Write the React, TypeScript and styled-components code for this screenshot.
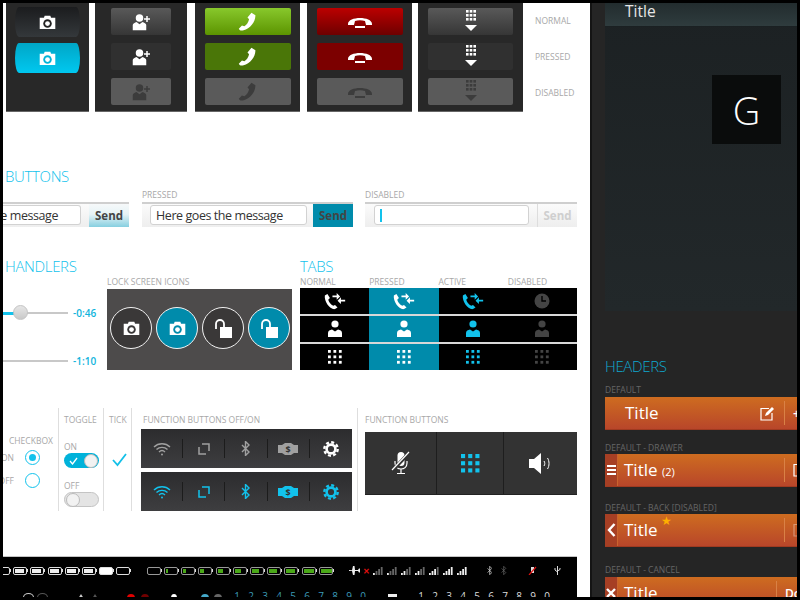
import React from 'react';
import styled, { createGlobalStyle } from 'styled-components';

const Global = createGlobalStyle`
  html, body { margin: 0; padding: 0; background: #000; }
  * { box-sizing: border-box; }
  body { font-family: "Open Sans", "Noto Sans", sans-serif; }
`;

const Frame = styled.div`
  width: 800px;
  height: 600px;
  border: 3px solid #000;
  display: flex;
  overflow: hidden;
`;

const Sheet = styled.div`
  width: 587px;
  height: 594px;
  background: #fff;
  display: flex;
  flex-direction: column;
  overflow: hidden;
`;

/* ---------- icons ---------- */

const Camera = ({ size = 17, ring = '#222' }: { size?: number; ring?: string }) => (
  <svg width={size} height={size * 0.88} viewBox="0 0 24 21">
    <path fill="#fff" d="M1 4h6l1-3h8l1 3h6v16H1z" />
    <circle cx="12" cy="12" r="6" fill={ring} />
    <circle cx="12" cy="12" r="3.4" fill="#fff" />
  </svg>
);

const AddContact = ({ color = '#fff' }: { color?: string }) => (
  <svg width="18" height="18" viewBox="0 0 24 24" fill={color}>
    <circle cx="10" cy="6.5" r="5" />
    <path d="M1 23v-7c0-2 3-3 5-4l4 3 4-3c2 1 5 2 5 4v7z" />
    <path d="M19 4h2v3h3v2h-3v3h-2V9h-3V7h3z" />
  </svg>
);

const Phone = ({ color = '#fff' }: { color?: string }) => (
  <svg width="19" height="19" viewBox="0 0 24 24" fill={color}>
    <path d="M17 1l5 3c0 9-7 17-15 19-3 1-5 0-6-2l4-4 3 1c3-2 5-5 6-9l-2-2z" />
  </svg>
);

const HangUp = ({ color = '#fff' }: { color?: string }) => (
  <svg width="26" height="14" viewBox="0 0 26 14" fill={color}>
    <path d="M1 9C1 1 25 1 25 9v1h-6l-1-4c-3-1-7-1-10 0l-1 4H1z" />
    <rect x="8" y="11" width="10" height="2" />
  </svg>
);

const Dots = ({ color = '#fff', size = 14, cell = 3.6, pitch = 7 }: { color?: string; size?: number; cell?: number; pitch?: number }) => (
  <svg width={size} height={size} viewBox="0 0 18 18" fill={color}>
    {[0, 1, 2].flatMap((r) => [0, 1, 2].map((c) => <rect key={`${r}${c}`} x={c * pitch} y={r * pitch} width={cell} height={cell} />))}
  </svg>
);

const DialDown = ({ color = '#fff' }: { color?: string }) => (
  <svg width="12" height="24" viewBox="0 0 12 24" fill={color}>
    {[0, 1, 2].flatMap((r) => [0, 1, 2].map((c) => <rect key={`${r}${c}`} x={1 + c * 3.7} y={r * 4} width="2.6" height="2.6" />))}
    <path d="M0 15h12l-6 6z" />
  </svg>
);

const CallLog = ({ color = '#fff' }: { color?: string }) => (
  <svg width="22" height="17" viewBox="0 0 26 20" fill={color}>
    <path d="M1 3l3-2 3 5-2 2c1 3 3 6 6 7l2-1 3 3-3 2C7 20 0 10 1 3z" />
    <path d="M10 3h5V0l4 4-4 4V5h-5zM25 8h-5V5l-4 4 4 4v-3h5z" />
  </svg>
);

const Clock = () => (
  <svg width="16" height="16" viewBox="0 0 16 16">
    <circle cx="8" cy="8" r="7.5" fill="#444" />
    <path d="M8 3v5h4" stroke="#000" strokeWidth="1.4" fill="none" />
  </svg>
);

const Contact = ({ color = '#fff' }: { color?: string }) => (
  <svg width="14" height="18" viewBox="0 0 14 18" fill={color}>
    <circle cx="7" cy="4" r="3.6" />
    <path d="M0 17v-4c0-2 2-3 4-3.4l3 2 3-2c2 .4 4 1.4 4 3.4v4z" />
  </svg>
);

const Lock = () => (
  <svg width="19" height="19" viewBox="0 0 19 19" fill="none">
    <path d="M2 10V5a4 4 0 018 0v3" stroke="#fff" strokeWidth="1.8" />
    <rect x="6" y="8" width="12" height="11" fill="#fff" />
  </svg>
);

const Wifi = ({ color }: { color: string }) => (
  <svg width="18" height="14" viewBox="0 0 18 14" fill="none" stroke={color} strokeWidth="1.4">
    <path d="M1 5c4.5-4.4 11.5-4.400 16 0M3.5 7.600c3-3 8-3 11 0M6 10c1.700-1.600 4.300-1.600 6 0" />
    <circle cx="9" cy="12.6" r="1" fill={color} stroke="none" />
  </svg>
);

const Rotate = ({ color }: { color: string }) => (
  <svg width="12" height="12" viewBox="0 0 12 12" fill="none" stroke={color} strokeWidth="1.5">
    <path d="M4 1h7v7M8 11H1V4" />
  </svg>
);

const Bluetooth = ({ color, h = 15, stroke = 1.4 }: { color: string; h?: number; stroke?: number }) => (
  <svg width={h * 0.6} height={h} viewBox="0 0 9 15" fill="none" stroke={color} strokeWidth={stroke}>
    <path d="M1 4l7 7-3.500 3.500v-14L8 4l-7 7" />
  </svg>
);

const Handshake = ({ color, text }: { color: string; text: string }) => (
  <svg width="20" height="12" viewBox="0 0 20 12">
    <path fill={color} d="M0 2h4l3-2h6l3 2h4v8h-4l-3 2H7l-3-2H0z" />
    <text x="10" y="9.5" fontSize="9" fontFamily="Open Sans" fontWeight="700" textAnchor="middle" fill={text}>$</text>
  </svg>
);

const Gear = ({ color }: { color: string }) => (
  <svg width="16" height="16" viewBox="0 0 16 16" fill="none" stroke={color}>
    <circle cx="8" cy="8" r="4.4" strokeWidth="2.6" />
    <circle cx="8" cy="8" r="6.7" strokeWidth="2.4" strokeDasharray="3 2.26" />
  </svg>
);

const MicOff = () => (
  <svg width="20" height="24" viewBox="0 0 20 24" fill="none" stroke="#fff">
    <rect x="6.5" y="1" width="7" height="14" rx="3.5" fill="#fff" stroke="none" />
    <path d="M4 10v2c0 8 12 8 12 0v-2M10 18v4M6 22.500h8" strokeWidth="1.2" />
    <path d="M1 20L18 2" stroke="#333" strokeWidth="3.4" />
    <path d="M1 19L18 1" strokeWidth="1.2" />
  </svg>
);

const Speaker = () => (
  <svg width="23" height="21" viewBox="0 0 23 21" fill="none" stroke="#fff">
    <path d="M0 6h5l7-6v21l-7-6H0z" fill="#fff" stroke="none" />
    <path d="M15 8c1 1.500 1 3.500 0 5M18.500 5c2 3 2 8 0 11" strokeWidth="1" />
  </svg>
);

const Tick = () => (
  <svg width="15" height="14" viewBox="0 0 15 14" fill="none" stroke="#14c0e8" strokeWidth="1.8">
    <path d="M1 7l4.500 5L14 1" />
  </svg>
);

const Edit = ({ faded }: { faded?: boolean }) => (
  <svg width="15" height="15" viewBox="0 0 15 15" fill="none" stroke="#fff" opacity={faded ? 0.35 : 1}>
    <path d="M9 2.500H1v11.500h11V7" strokeWidth="1.2" />
    <path d="M5 10l1-3 6-6 2 2-6 6z" fill="#fff" stroke="none" />
  </svg>
);

const Chevron = () => (
  <svg width="9" height="14" viewBox="0 0 9 14" fill="none" stroke="#fff" strokeWidth="2.4">
    <path d="M7.500 1L2 7l5.500 6" />
  </svg>
);

const Cross = () => (
  <svg width="10" height="10" viewBox="0 0 10 10" fill="none" stroke="#fff" strokeWidth="2.4">
    <path d="M1 1l8 8M9 1l-8 8" />
  </svg>
);

/* ---------- state buttons ---------- */

const ButtonRow = styled.div`
  height: 109px;
  display: flex;
  align-items: stretch;
  flex: none;
`;

const Panel = styled.div<{ $left: number; $width: number }>`
  margin-left: ${(p) => p.$left}px;
  width: ${(p) => p.$width}px;
  background: #282828;
  border-bottom: 1px solid #666;
  display: flex;
  flex-direction: column;
  align-items: center;
  padding-top: 5px;
  gap: 8px;
`;

const CamButton = styled.div<{ $on?: boolean }>`
  width: 65px;
  height: 30px;
  margin-top: ${(p) => (p.$on ? '-2px' : '-1px')};
  border-radius: 4px / 50%;
  display: flex;
  align-items: center;
  justify-content: center;
  background: ${(p) => (p.$on ? 'linear-gradient(#00a6c6, #00c8f0)' : 'linear-gradient(#1b1c1e, #34383b)')};
`;

const variants: Record<string, string> = {
  gray: 'linear-gradient(#595959, #363636)',
  grayDown: '#303030',
  off: '#5a5a5a',
  green: 'linear-gradient(#88c82c, #5c9400)',
  greenDown: '#4a7608',
  red: 'linear-gradient(#bb0000, #6e0000)',
  redDown: '#7c0000',
};

const StateButton = styled.div<{ $kind: string; $width: number }>`
  width: ${(p) => p.$width}px;
  height: 27px;
  border-radius: 2px;
  display: flex;
  align-items: center;
  justify-content: center;
  background: ${(p) => variants[p.$kind]};
`;

const StateLabels = styled.div`
  margin-left: 12px;
  display: flex;
  flex-direction: column;
  padding-top: 12px;
  gap: 25px;
`;

const Tiny = styled.div`
  font-size: 8.5px;
  line-height: 11px;
  color: #a8a8a8;
  white-space: nowrap;
`;

/* ---------- sections ---------- */

const SectionTitle = styled.div<{ $top?: number }>`
  margin-top: ${(p) => p.$top ?? 0}px;
  font-size: 15px;
  font-weight: 300;
  line-height: 17px;
  letter-spacing: -0.35px;
  color: #12c2ec;
  padding-left: 2px;
  flex: none;
`;

const FieldRow = styled.div`
  margin-top: 4px;
  height: 38px;
  display: flex;
  flex: none;
`;

const FieldGroup = styled.div<{ $left: number; $width: number }>`
  margin-left: ${(p) => p.$left}px;
  width: ${(p) => p.$width}px;
  display: flex;
  flex-direction: column;
  justify-content: flex-end;
`;

const FieldLabel = styled(Tiny)`
  margin-bottom: 2px;
`;

const FieldBar = styled.div`
  height: 25px;
  flex: none;
  border-top: 2px solid #cfcfcf;
  background: linear-gradient(#fbfbfb, #eeeeee);
  display: flex;
  justify-content: flex-end;
  align-items: stretch;
  overflow: hidden;
`;

const FieldInput = styled.div<{ $width: number; $open?: boolean; $gap: number }>`
  width: ${(p) => p.$width}px;
  height: 20px;
  margin-top: 1px;
  margin-right: ${(p) => p.$gap}px;
  background: #fff;
  border: 1px solid #d2d2d2;
  border-left: ${(p) => (p.$open ? 'none' : '1px solid #d2d2d2')};
  border-radius: ${(p) => (p.$open ? '0 3px 3px 0' : '3px')};
  display: flex;
  justify-content: ${(p) => (p.$open ? 'flex-end' : 'flex-start')};
  align-items: center;
  padding: 0 22px 0 5px;
  font-size: 12.5px;
  letter-spacing: -0.43px;
  color: #333;
  white-space: nowrap;
  overflow: hidden;
`;

const Caret = styled.div`
  width: 1.5px;
  height: 13px;
  background: #12c2ec;
`;

const SendButton = styled.div<{ $state: 'normal' | 'pressed' | 'disabled' }>`
  width: 40px;
  display: flex;
  align-items: center;
  justify-content: center;
  font-size: 11.5px;
  font-weight: 700;
  color: ${(p) => (p.$state === 'disabled' ? '#cfcfcf' : '#444')};
  border-left: ${(p) => (p.$state === 'disabled' ? '1px solid #ddd' : 'none')};
  background: ${(p) =>
    p.$state === 'pressed'
      ? '#008bab'
      : p.$state === 'normal'
        ? 'linear-gradient(#f6f9fa, #e6f3f6 45%, #86cfe0)'
        : 'transparent'};
`;

const HandlerRow = styled.div`
  margin-top: 31px;
  height: 112px;
  display: flex;
  flex: none;
`;

const SliderCol = styled.div`
  width: 104px;
`;

const SliderRow = styled.div<{ $top: number }>`
  margin-top: ${(p) => p.$top}px;
  height: 16px;
  display: flex;
  align-items: center;
  gap: 5px;
`;

const Track = styled.div`
  position: relative;
  width: 65px;
  height: 2px;
  background: #c8c8c8;
`;

const TrackFill = styled.div`
  position: absolute;
  left: 0;
  top: -0.5px;
  height: 3px;
  background: #12c2ec;
`;

const Knob = styled.div`
  position: absolute;
  top: -7px;
  width: 15px;
  height: 15px;
  border-radius: 50%;
  border: 1px solid #c4c4c4;
  background: linear-gradient(#e6e6e6, #c9c9c9);
`;

const TimeText = styled.div`
  font-size: 10px;
  font-weight: 600;
  color: #10b4dc;
`;

const LockCol = styled.div`
  width: 185px;
  padding-top: 18px;
  display: flex;
  flex-direction: column;
`;

const LockLabel = styled(Tiny)`
  margin-bottom: 2px;
`;

const LockPanel = styled.div`
  flex: 1;
  background: #4d4b4b;
  padding: 18px 0 0 3px;
  display: flex;
  align-items: flex-start;
  gap: 4px;
`;

const LockCircle = styled.div<{ $on?: boolean }>`
  width: 42px;
  height: 42px;
  border-radius: 50%;
  border: 1.5px solid #f2f2f2;
  background: ${(p) => (p.$on ? '#008bab' : '#3a3838')};
  display: flex;
  align-items: center;
  justify-content: center;
`;

const TabsCol = styled.div`
  margin-left: 8px;
  width: 277px;
`;

const TabsTitle = styled(SectionTitle)`
  padding-left: 0;
`;

const TabHeads = styled.div`
  margin-top: 1px;
  height: 12px;
  display: grid;
  grid-template-columns: repeat(4, 1fr);
`;

const TabTable = styled.div`
  display: flex;
  flex-direction: column;
  gap: 2px;
  background: #d8d8d8;
  height: 82px;
`;

const TabRow = styled.div`
  height: 26px;
  display: grid;
  grid-template-columns: repeat(4, 1fr);
  background: #000;
`;

const TabCell = styled.div<{ $pressed?: boolean }>`
  display: flex;
  align-items: center;
  justify-content: center;
  background: ${(p) => (p.$pressed ? '#008bab' : '#000')};
`;

/* ---------- controls ---------- */

const ControlRow = styled.div`
  margin-top: 38px;
  height: 103px;
  display: flex;
  flex: none;
`;

const ControlCol = styled.div<{ $width: number; $pad: number; $top?: number; $end?: boolean }>`
  width: ${(p) => p.$width}px;
  padding: ${(p) => p.$top ?? 6}px 0 0 ${(p) => p.$pad}px;
  border-right: ${(p) => (p.$end ? 'none' : '1px solid #dedede')};
  flex: none;
`;

const CheckRow = styled.div<{ $top: number }>`
  margin: ${(p) => p.$top}px 0 0 -6px;
  display: flex;
  align-items: center;
`;

const CheckText = styled(Tiny)`
  width: 11px;
  display: flex;
  justify-content: flex-end;
  overflow: hidden;
  margin-right: 11px;
`;

const Radio = styled.div<{ $on?: boolean }>`
  width: 15px;
  height: 15px;
  border-radius: 50%;
  border: 1.8px solid #12c2ec;
  display: flex;
  align-items: center;
  justify-content: center;
  &::after {
    content: '';
    width: 7px;
    height: 7px;
    border-radius: 50%;
    background: ${(p) => (p.$on ? '#12c2ec' : 'transparent')};
  }
`;

const ToggleLabel = styled(Tiny)<{ $top: number }>`
  margin-top: ${(p) => p.$top}px;
`;

const Toggle = styled.div<{ $on?: boolean }>`
  width: 35px;
  height: 15px;
  margin-top: 1px;
  border-radius: 8px;
  display: flex;
  align-items: center;
  justify-content: ${(p) => (p.$on ? 'space-between' : 'flex-start')};
  padding: 0 1px 0 ${(p) => (p.$on ? 5 : 1)}px;
  background: ${(p) => (p.$on ? '#00b2da' : '#e4e4e4')};
  border: ${(p) => (p.$on ? 'none' : '1px solid #c4c4c4')};
  &::after {
    content: '';
    width: 12px;
    height: 12px;
    border-radius: 50%;
    background: #f2f2f2;
    border: 1px solid #bbb;
  }
`;

const TickMark = styled.div`
  margin: 25px 0 0 3px;
`;

const FunctionLabel = styled(Tiny)`
  padding-left: 2px;
`;

const FunctionBar = styled.div`
  width: 211px;
  height: 39px;
  margin-top: 4px;
  display: grid;
  grid-template-columns: repeat(5, 1fr);
  align-items: center;
  background: linear-gradient(#2c2c2e, #3e3e40);
`;

const FunctionCell = styled.div<{ $last?: boolean }>`
  height: 19px;
  display: flex;
  align-items: center;
  justify-content: center;
  border-right: ${(p) => (p.$last ? 'none' : '1px solid #1c1c1c')};
`;

const BigPanel = styled.div`
  margin-top: 7px;
  width: 212px;
  height: 63px;
  display: grid;
  grid-template-columns: 72px 67px 73px;
  background: #333;
  border-bottom: 1px solid #222;
`;

const BigCell = styled.div<{ $last?: boolean }>`
  display: flex;
  align-items: center;
  justify-content: center;
  border-right: ${(p) => (p.$last ? 'none' : '1px solid #1e1e1e')};
`;

/* ---------- status strip ---------- */

const Strip = styled.div`
  margin-top: 45px;
  width: 574px;
  flex: 1;
  background: #000;
  border-top: 1px solid #c4c4c4;
  overflow: hidden;
  padding-top: 9px;
`;

const StripLine = styled.div<{ $top?: number }>`
  display: flex;
  align-items: center;
  height: 9px;
  margin-top: ${(p) => p.$top ?? 0}px;
`;

const BatteryGroup = styled.div<{ $left: number }>`
  margin-left: ${(p) => p.$left}px;
  display: flex;
  flex: none;
  gap: 3.2px;
`;

const Battery = styled.div<{ $fill: number; $green?: boolean; $bright?: boolean }>`
  position: relative;
  width: 14px;
  height: 8px;
  flex: none;
  border: 1px solid ${(p) => (p.$green ? '#999' : '#ddd')};
  border-radius: 2px;
  background: ${(p) => (p.$bright ? '#fff' : 'transparent')};
  &::before {
    content: '';
    position: absolute;
    left: 1px;
    top: 1px;
    bottom: 1px;
    width: ${(p) => p.$fill}px;
    background: ${(p) => (p.$green ? '#4aa818' : '#eee')};
  }
  &::after {
    content: '';
    position: absolute;
    right: -2px;
    top: 1.5px;
    width: 1px;
    height: 3px;
    background: #ddd;
  }
`;

const SignalSet = styled.div<{ $left: number }>`
  margin-left: ${(p) => p.$left}px;
  display: flex;
  flex: none;
  gap: 4px;
`;

const Signal = ({ level }: { level: number }) => (
  <svg width="10" height="9" viewBox="0 0 10 9">
    {[0, 1, 2, 3].map((i) => (
      <rect key={i} x={i * 2.6} y={7 - i * 2} width="1.8" height={2 + i * 2} fill={i < level ? '#eee' : '#666'} />
    ))}
  </svg>
);

const Place = styled.div<{ $left: number }>`
  margin-left: ${(p) => p.$left}px;
  display: flex;
  flex: none;
  align-items: center;
`;

const RedX = styled.span`
  margin-left: 3px;
  color: #e01010;
  font-size: 8px;
  font-weight: 700;
  line-height: 9px;
`;

const DigitRun = styled.div<{ $left: number; $color: string }>`
  margin: -2px 0 0 ${(p) => p.$left}px;
  display: flex;
  font-size: 10px;
  line-height: 9px;
  height: 9px;
  color: ${(p) => p.$color};
  flex: none;
  span {
    width: 14px;
    text-align: center;
  }
`;

const Blob = styled.div<{ $left: number; $color: string; $w?: number }>`
  margin-left: ${(p) => p.$left}px;
  width: ${(p) => p.$w ?? 8}px;
  height: 8px;
  border-radius: 50%;
  background: ${(p) => p.$color};
  flex: none;
`;

const GaugeIcon = styled.div<{ $left: number; $color: string }>`
  margin-left: ${(p) => p.$left}px;
  width: 11px;
  height: 9px;
  border: 1px solid ${(p) => p.$color};
  border-radius: 50%;
  flex: none;
`;

const UpTri = styled.div<{ $left: number; $color: string }>`
  margin-left: ${(p) => p.$left}px;
  width: 0;
  height: 0;
  border-left: 5px solid transparent;
  border-right: 5px solid transparent;
  border-bottom: 8px solid ${(p) => p.$color};
  flex: none;
`;

const WhiteRect = styled.div<{ $left: number }>`
  margin-left: ${(p) => p.$left}px;
  width: 9px;
  height: 8px;
  background: #eee;
  flex: none;
`;

/* ---------- dark side ---------- */

const DarkSide = styled.div`
  width: 207px;
  height: 594px;
  background: #252525;
  border-left: 2px solid #141414;
  padding-left: 13px;
  display: flex;
  flex-direction: column;
  overflow: hidden;
`;

const Screen = styled.div`
  height: 308px;
  flex: none;
  background: linear-gradient(#1c2123, #22282a);
  display: flex;
  flex-direction: column;
`;

const ScreenBar = styled.div`
  height: 24px;
  padding-left: 20px;
  font-size: 15.5px;
  line-height: 16px;
  color: #e6e6e6;
  background: linear-gradient(#222c2e, #2f3c3e);
  border-bottom: 1px solid #1a2022;
`;

const ScreenBody = styled.div`
  flex: 1;
  padding: 48px 0 0 107px;
`;

const Tile = styled.div`
  width: 69px;
  height: 69px;
  background: #0a0c0c;
  color: #fff;
  display: flex;
  align-items: center;
  justify-content: center;
  font-size: 38px;
  font-weight: 300;
`;

const DarkTitle = styled.div`
  margin-top: 47px;
  font-size: 15px;
  font-weight: 300;
  line-height: 17px;
  letter-spacing: -0.35px;
  color: #0fa8d0;
  flex: none;
`;

const DarkLabel = styled(Tiny)<{ $top: number }>`
  margin-top: ${(p) => p.$top}px;
  color: #666;
  flex: none;
`;

const HeaderBar = styled.div<{ $gap: number }>`
  margin-top: ${(p) => p.$gap}px;
  height: 33px;
  flex: none;
  display: flex;
  align-items: stretch;
  background: linear-gradient(#ce6c20, #b8462a);
  border-bottom: 1px solid #a03a20;
  color: #fff;
  overflow: hidden;
`;

const BackCell = styled.div`
  width: 13px;
  flex: none;
  background: #a63f24;
  border-right: 1px solid #c9642e;
  display: flex;
  align-items: center;
  justify-content: center;
`;

const HeaderTitle = styled.div<{ $pad: number }>`
  flex: 1;
  padding-left: ${(p) => p.$pad}px;
  font-size: 17px;
  line-height: 32px;
  position: relative;
  white-space: nowrap;
  small {
    font-size: 11px;
  }
`;

const Star = styled.span`
  position: absolute;
  left: 43px;
  top: 1px;
  color: #ffb000;
  font-size: 12px;
  line-height: 12px;
`;

const HeaderAction = styled.div<{ $width: number }>`
  width: ${(p) => p.$width}px;
  flex: none;
  margin: 4px 0;
  border-left: 1px solid #d98146;
  padding: 4px 0 0 8px;
  overflow: hidden;
  font-size: 12px;
  font-weight: 600;
  white-space: nowrap;
`;

const HeaderIcon = styled.div`
  width: 24px;
  flex: none;
  display: flex;
  align-items: center;
`;

const Burger = styled.div`
  width: 9px;
  height: 10px;
  border-top: 2px solid #fff;
  border-bottom: 2px solid #fff;
  position: relative;
  &::after {
    content: '';
    position: absolute;
    left: 0;
    right: 0;
    top: 2px;
    height: 2px;
    background: #fff;
  }
`;

const states = [0, 1, 2];
const digits = ['1', '2', '3', '4', '5', '6', '7', '8', '9', '0'];

function FunctionIcons({ color, text, gear }: { color: string; text: string; gear: string }) {
  return (
    <FunctionBar>
      <FunctionCell><Wifi color={color} /></FunctionCell>
      <FunctionCell><Rotate color={color} /></FunctionCell>
      <FunctionCell><Bluetooth color={color} /></FunctionCell>
      <FunctionCell><Handshake color={color} text={text} /></FunctionCell>
      <FunctionCell $last><Gear color={gear} /></FunctionCell>
    </FunctionBar>
  );
}

export default function App() {
  const grayKinds = ['gray', 'grayDown', 'off'];
  return (
    <Frame>
      <Global />
      <Sheet>
        <ButtonRow>
          <Panel $left={3} $width={83}>
            <CamButton><Camera /></CamButton>
            <CamButton $on><Camera ring="#00b4d8" /></CamButton>
          </Panel>
          <Panel $left={6} $width={92}>
            {states.map((i) => (
              <StateButton key={i} $kind={grayKinds[i]} $width={60}>
                <AddContact color={i === 2 ? '#3c3c3c' : '#fff'} />
              </StateButton>
            ))}
          </Panel>
          <Panel $left={8} $width={105}>
            {states.map((i) => (
              <StateButton key={i} $kind={['green', 'greenDown', 'off'][i]} $width={86}>
                <Phone color={i === 2 ? '#3c3c3c' : '#fff'} />
              </StateButton>
            ))}
          </Panel>
          <Panel $left={7} $width={105}>
            {states.map((i) => (
              <StateButton key={i} $kind={['red', 'redDown', 'off'][i]} $width={86}>
                <HangUp color={i === 2 ? '#3c3c3c' : '#fff'} />
              </StateButton>
            ))}
          </Panel>
          <Panel $left={6} $width={105}>
            {states.map((i) => (
              <StateButton key={i} $kind={grayKinds[i]} $width={85}>
                <DialDown color={i === 2 ? '#3c3c3c' : '#fff'} />
              </StateButton>
            ))}
          </Panel>
          <StateLabels>
            <Tiny>NORMAL</Tiny>
            <Tiny>PRESSED</Tiny>
            <Tiny>DISABLED</Tiny>
          </StateLabels>
        </ButtonRow>

        <SectionTitle $top={56}>BUTTONS</SectionTitle>
        <FieldRow>
          <FieldGroup $left={0} $width={126}>
            <FieldBar>
              <FieldInput $width={78} $gap={8} $open>Here goes the message</FieldInput>
              <SendButton $state="normal">Send</SendButton>
            </FieldBar>
          </FieldGroup>
          <FieldGroup $left={13} $width={211}>
            <FieldLabel>PRESSED</FieldLabel>
            <FieldBar>
              <FieldInput $width={157} $gap={6}>Here goes the message</FieldInput>
              <SendButton $state="pressed">Send</SendButton>
            </FieldBar>
          </FieldGroup>
          <FieldGroup $left={12} $width={212}>
            <FieldLabel>DISABLED</FieldLabel>
            <FieldBar>
              <FieldInput $width={155} $gap={8}><Caret /></FieldInput>
              <SendButton $state="disabled">Send</SendButton>
            </FieldBar>
          </FieldGroup>
        </FieldRow>

        <HandlerRow>
          <SliderCol>
            <SectionTitle>HANDLERS</SectionTitle>
            <SliderRow $top={30}>
              <Track>
                <TrackFill style={{ width: 11 }} />
                <Knob style={{ left: 10 }} />
              </Track>
              <TimeText>-0:46</TimeText>
            </SliderRow>
            <SliderRow $top={32}>
              <Track />
              <TimeText>-1:10</TimeText>
            </SliderRow>
          </SliderCol>
          <LockCol>
            <LockLabel>LOCK SCREEN ICONS</LockLabel>
            <LockPanel>
              <LockCircle><Camera ring="#3a3838" /></LockCircle>
              <LockCircle $on><Camera ring="#008bab" /></LockCircle>
              <LockCircle><Lock /></LockCircle>
              <LockCircle $on><Lock /></LockCircle>
            </LockPanel>
          </LockCol>
          <TabsCol>
            <TabsTitle>TABS</TabsTitle>
            <TabHeads>
              <Tiny>NORMAL</Tiny>
              <Tiny>PRESSED</Tiny>
              <Tiny>ACTIVE</Tiny>
              <Tiny>DISABLED</Tiny>
            </TabHeads>
            <TabTable>
              <TabRow>
                <TabCell><CallLog /></TabCell>
                <TabCell $pressed><CallLog /></TabCell>
                <TabCell><CallLog color="#12c2ec" /></TabCell>
                <TabCell><Clock /></TabCell>
              </TabRow>
              <TabRow>
                <TabCell><Contact /></TabCell>
                <TabCell $pressed><Contact /></TabCell>
                <TabCell><Contact color="#12c2ec" /></TabCell>
                <TabCell><Contact color="#444" /></TabCell>
              </TabRow>
              <TabRow>
                <TabCell><Dots /></TabCell>
                <TabCell $pressed><Dots /></TabCell>
                <TabCell><Dots color="#12c2ec" /></TabCell>
                <TabCell><Dots color="#444" /></TabCell>
              </TabRow>
            </TabTable>
          </TabsCol>
        </HandlerRow>

        <ControlRow>
          <ControlCol $width={56} $pad={6} $top={27}>
            <Tiny>CHECKBOX</Tiny>
            <CheckRow $top={4}>
              <CheckText>ON</CheckText>
              <Radio $on />
            </CheckRow>
            <CheckRow $top={8}>
              <CheckText>OFF</CheckText>
              <Radio />
            </CheckRow>
          </ControlCol>
          <ControlCol $width={45} $pad={5} $top={6}>
            <Tiny>TOGGLE</Tiny>
            <ToggleLabel $top={16}>ON</ToggleLabel>
            <Toggle $on><svg width="9" height="8" viewBox="0 0 9 8" fill="none" stroke="#fff" strokeWidth="1.3"><path d="M1 4l2.500 3L8 1" /></svg></Toggle>
            <ToggleLabel $top={12}>OFF</ToggleLabel>
            <Toggle />
          </ControlCol>
          <ControlCol $width={28} $pad={5} $top={6}>
            <Tiny>TICK</Tiny>
            <TickMark><Tick /></TickMark>
          </ControlCol>
          <ControlCol $width={226} $pad={9}>
            <FunctionLabel>FUNCTION BUTTONS OFF/ON</FunctionLabel>
            <FunctionIcons color="#a0a0a0" text="#333" gear="#fff" />
            <FunctionIcons color="#12c2ec" text="#333" gear="#12c2ec" />
          </ControlCol>
          <ControlCol $width={219} $pad={7} $end>
            <Tiny>FUNCTION BUTTONS</Tiny>
            <BigPanel>
              <BigCell><MicOff /></BigCell>
              <BigCell><Dots color="#12c2ec" size={19} cell={3.9} pitch={6.8} /></BigCell>
              <BigCell $last><Speaker /></BigCell>
            </BigPanel>
          </ControlCol>
        </ControlRow>

        <Strip>
          <StripLine>
            <BatteryGroup $left={-7}>
              {[0, 9, 9, 9, 9, 9].map((f, i) => <Battery key={i} $fill={f} />)}
              <Battery $fill={0} $bright />
              <Battery $fill={0} />
            </BatteryGroup>
            <BatteryGroup $left={16.6}>
              {[0, 2, 3, 4, 5, 6, 7, 8, 9, 10, 11].map((f, i) => <Battery key={i} $fill={f} $green />)}
            </BatteryGroup>
            <Place $left={16}>
              <svg width="11" height="9" viewBox="0 0 11 9" fill="#eee"><path d="M0 4l3 .2L4 0h1.500l.5 4h3l1-1.500h1v4h-1L9 5H6l-.5 4H4L3 5H0z" /></svg>
              <RedX>✕</RedX>
            </Place>
            <SignalSet $left={3}>
              {[1, 1, 2, 2, 3, 4, 4].map((l, i) => <Signal key={i} level={l} />)}
            </SignalSet>
            <Place $left={20}><Bluetooth color="#ddd" h={9} stroke={1.2} /></Place>
            <Place $left={9}><Bluetooth color="#666" h={9} stroke={1.2} /></Place>
            <Place $left={21}>
              <svg width="9" height="9" viewBox="0 0 9 9" fill="none"><path d="M3 1h3v6H3z" fill="#ddd" /><path d="M1 9l7-8" stroke="#e01010" strokeWidth="1.2" /></svg>
            </Place>
            <Place $left={17}>
              <svg width="7" height="9" viewBox="0 0 7 9" fill="none" stroke="#ddd"><path d="M3.500 0v9M1 2v2l2.500 2M6 2v1.500L3.500 5" /></svg>
            </Place>
          </StripLine>
          <StripLine $top={18}>
            <GaugeIcon $left={20} $color="#ccc" />
            <GaugeIcon $left={3} $color="#555" />
            <UpTri $left={28} $color="#ccc" />
            <UpTri $left={4} $color="#555" />
            <Blob $left={27} $color="#e00000" />
            <Blob $left={6} $color="#700000" />
            <Blob $left={22} $color="#fff" $w={6} />
            <Blob $left={24} $color="#45a9c9" />
            <Blob $left={5} $color="#666" />
            <DigitRun $left={8} $color="#3c9ab8">
              {digits.map((d) => <span key={d}>{d}</span>)}
            </DigitRun>
            <WhiteRect $left={18} />
            <DigitRun $left={17} $color="#ddd">
              {digits.map((d) => <span key={d}>{d}</span>)}
              <span>.</span>
            </DigitRun>
          </StripLine>
        </Strip>
      </Sheet>

      <DarkSide>
        <Screen>
          <ScreenBar>Title</ScreenBar>
          <ScreenBody>
            <Tile>G</Tile>
          </ScreenBody>
        </Screen>
        <DarkTitle>HEADERS</DarkTitle>
        <DarkLabel $top={9}>DEFAULT</DarkLabel>
        <HeaderBar $gap={2}>
          <HeaderTitle $pad={20}>Title</HeaderTitle>
          <HeaderIcon><Edit /></HeaderIcon>
          <HeaderAction $width={13}>+</HeaderAction>
        </HeaderBar>
        <DarkLabel $top={12}>DEFAULT - DRAWER</DarkLabel>
        <HeaderBar $gap={1}>
          <BackCell><Burger /></BackCell>
          <HeaderTitle $pad={6}>Title <small>(2)</small></HeaderTitle>
          <HeaderAction $width={13}><Edit /></HeaderAction>
        </HeaderBar>
        <DarkLabel $top={15}>DEFAULT - BACK [DISABLED]</DarkLabel>
        <HeaderBar $gap={1}>
          <BackCell><Chevron /></BackCell>
          <HeaderTitle $pad={6}>Title<Star>★</Star></HeaderTitle>
          <HeaderAction $width={13}><Edit faded /></HeaderAction>
        </HeaderBar>
        <DarkLabel $top={17}>DEFAULT - CANCEL</DarkLabel>
        <HeaderBar $gap={2}>
          <BackCell><Cross /></BackCell>
          <HeaderTitle $pad={6}>Title</HeaderTitle>
          <HeaderAction $width={21}>Done</HeaderAction>
        </HeaderBar>
      </DarkSide>
    </Frame>
  );
}
